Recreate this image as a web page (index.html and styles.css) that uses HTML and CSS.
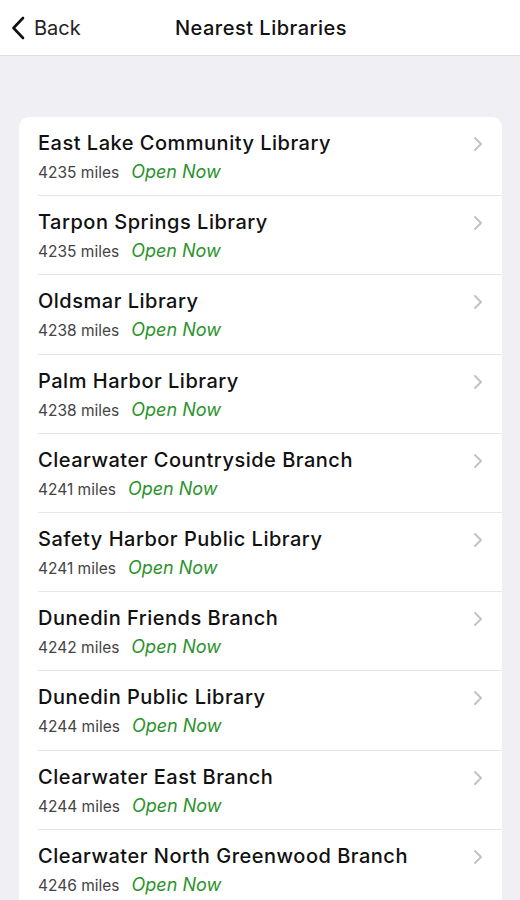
FILE: index.html
```html
<!DOCTYPE html>
<html lang="en">
  <head>
    <meta charset="UTF-8" />
    <meta name="viewport" content="width=device-width, initial-scale=1.0" />
    <title>Nearest Libraries</title>
    <link rel="stylesheet" href="styles.css">
  </head>
  <body>
    <header class="nav-bar">
      <a class="back" href="#">
        <svg class="back-icon" viewBox="0 0 14 24" width="14" height="24">
          <path d="M12 2 L2.5 12 L12 22" fill="none" stroke="#111" stroke-width="2.6" stroke-linecap="round" stroke-linejoin="round" />
        </svg>
        <span>Back</span>
      </a>
      <h1>Nearest Libraries</h1>
    </header>

    <main class="content">
      <ul class="library-list">
        <li class="library">
          <div class="info">
            <div class="name">East Lake Community Library</div>
            <div class="meta"><span class="distance">4235 miles</span><span class="open">Open Now</span></div>
          </div>
          <svg class="chevron" viewBox="0 0 10 16" width="10" height="16"><path d="M2 2 L8 8 L2 14" fill="none" stroke="#c3c3c7" stroke-width="2" stroke-linecap="round" stroke-linejoin="round" /></svg>
        </li>
        <li class="library">
          <div class="info">
            <div class="name">Tarpon Springs Library</div>
            <div class="meta"><span class="distance">4235 miles</span><span class="open">Open Now</span></div>
          </div>
          <svg class="chevron" viewBox="0 0 10 16" width="10" height="16"><path d="M2 2 L8 8 L2 14" fill="none" stroke="#c3c3c7" stroke-width="2" stroke-linecap="round" stroke-linejoin="round" /></svg>
        </li>
        <li class="library">
          <div class="info">
            <div class="name">Oldsmar Library</div>
            <div class="meta"><span class="distance">4238 miles</span><span class="open">Open Now</span></div>
          </div>
          <svg class="chevron" viewBox="0 0 10 16" width="10" height="16"><path d="M2 2 L8 8 L2 14" fill="none" stroke="#c3c3c7" stroke-width="2" stroke-linecap="round" stroke-linejoin="round" /></svg>
        </li>
        <li class="library">
          <div class="info">
            <div class="name">Palm Harbor Library</div>
            <div class="meta"><span class="distance">4238 miles</span><span class="open">Open Now</span></div>
          </div>
          <svg class="chevron" viewBox="0 0 10 16" width="10" height="16"><path d="M2 2 L8 8 L2 14" fill="none" stroke="#c3c3c7" stroke-width="2" stroke-linecap="round" stroke-linejoin="round" /></svg>
        </li>
        <li class="library">
          <div class="info">
            <div class="name">Clearwater Countryside Branch</div>
            <div class="meta"><span class="distance">4241 miles</span><span class="open">Open Now</span></div>
          </div>
          <svg class="chevron" viewBox="0 0 10 16" width="10" height="16"><path d="M2 2 L8 8 L2 14" fill="none" stroke="#c3c3c7" stroke-width="2" stroke-linecap="round" stroke-linejoin="round" /></svg>
        </li>
        <li class="library">
          <div class="info">
            <div class="name">Safety Harbor Public Library</div>
            <div class="meta"><span class="distance">4241 miles</span><span class="open">Open Now</span></div>
          </div>
          <svg class="chevron" viewBox="0 0 10 16" width="10" height="16"><path d="M2 2 L8 8 L2 14" fill="none" stroke="#c3c3c7" stroke-width="2" stroke-linecap="round" stroke-linejoin="round" /></svg>
        </li>
        <li class="library">
          <div class="info">
            <div class="name">Dunedin Friends Branch</div>
            <div class="meta"><span class="distance">4242 miles</span><span class="open">Open Now</span></div>
          </div>
          <svg class="chevron" viewBox="0 0 10 16" width="10" height="16"><path d="M2 2 L8 8 L2 14" fill="none" stroke="#c3c3c7" stroke-width="2" stroke-linecap="round" stroke-linejoin="round" /></svg>
        </li>
        <li class="library">
          <div class="info">
            <div class="name">Dunedin Public Library</div>
            <div class="meta"><span class="distance">4244 miles</span><span class="open">Open Now</span></div>
          </div>
          <svg class="chevron" viewBox="0 0 10 16" width="10" height="16"><path d="M2 2 L8 8 L2 14" fill="none" stroke="#c3c3c7" stroke-width="2" stroke-linecap="round" stroke-linejoin="round" /></svg>
        </li>
        <li class="library">
          <div class="info">
            <div class="name">Clearwater East Branch</div>
            <div class="meta"><span class="distance">4244 miles</span><span class="open">Open Now</span></div>
          </div>
          <svg class="chevron" viewBox="0 0 10 16" width="10" height="16"><path d="M2 2 L8 8 L2 14" fill="none" stroke="#c3c3c7" stroke-width="2" stroke-linecap="round" stroke-linejoin="round" /></svg>
        </li>
        <li class="library">
          <div class="info">
            <div class="name">Clearwater North Greenwood Branch</div>
            <div class="meta"><span class="distance">4246 miles</span><span class="open">Open Now</span></div>
          </div>
          <svg class="chevron" viewBox="0 0 10 16" width="10" height="16"><path d="M2 2 L8 8 L2 14" fill="none" stroke="#c3c3c7" stroke-width="2" stroke-linecap="round" stroke-linejoin="round" /></svg>
        </li>
      </ul>
    </main>
  </body>
</html>
```
FILE: styles.css
```css
html,
body {
  height: 100%;
}
body {
  margin: 0;
  font-family: Inter, "Liberation Sans", Arial, sans-serif;
  background-color: #efeff4;
  color: #111;
  overflow: hidden;
}
.nav-bar {
  height: 56px;
  background-color: #fff;
  border-bottom: 1px solid #dedee2;
  display: flex;
  align-items: center;
  justify-content: center;
  position: relative;
  box-sizing: border-box;
}
.nav-bar h1 {
  margin: 0;
  font-size: 20px;
  font-weight: 500;
  letter-spacing: 0.5px;
  color: #111;
  padding-left: 2px;
}
.back {
  position: absolute;
  left: 11px;
  top: 16px;
  display: flex;
  align-items: center;
  gap: 9px;
  color: #222;
  text-decoration: none;
  font-size: 20px;
}
.back-icon {
  display: block;
}
.content {
  padding: 61px 18px 0 19px;
}
.library-list {
  list-style: none;
  margin: 0;
  padding: 0 0 0 19px;
  background-color: #fff;
  border-radius: 10px;
}
.library {
  display: flex;
  align-items: flex-start;
  height: 78.2px;
  border-bottom: 1px solid #e6e6ea;
}
.info {
  flex: 1;
  padding-top: 14px;
}
.name {
  font-size: 20px;
  font-weight: 500;
  letter-spacing: 0.5px;
  line-height: 24px;
  color: #111;
}
.meta {
  margin-top: 6px;
  display: flex;
  align-items: baseline;
  gap: 12px;
  line-height: 22px;
}
.distance {
  font-size: 15.5px;
  color: #444;
}
.open {
  font-size: 18px;
  font-style: italic;
  color: #2b932b;
}
.chevron {
  margin: 19px 19px 0 0;
}
```
